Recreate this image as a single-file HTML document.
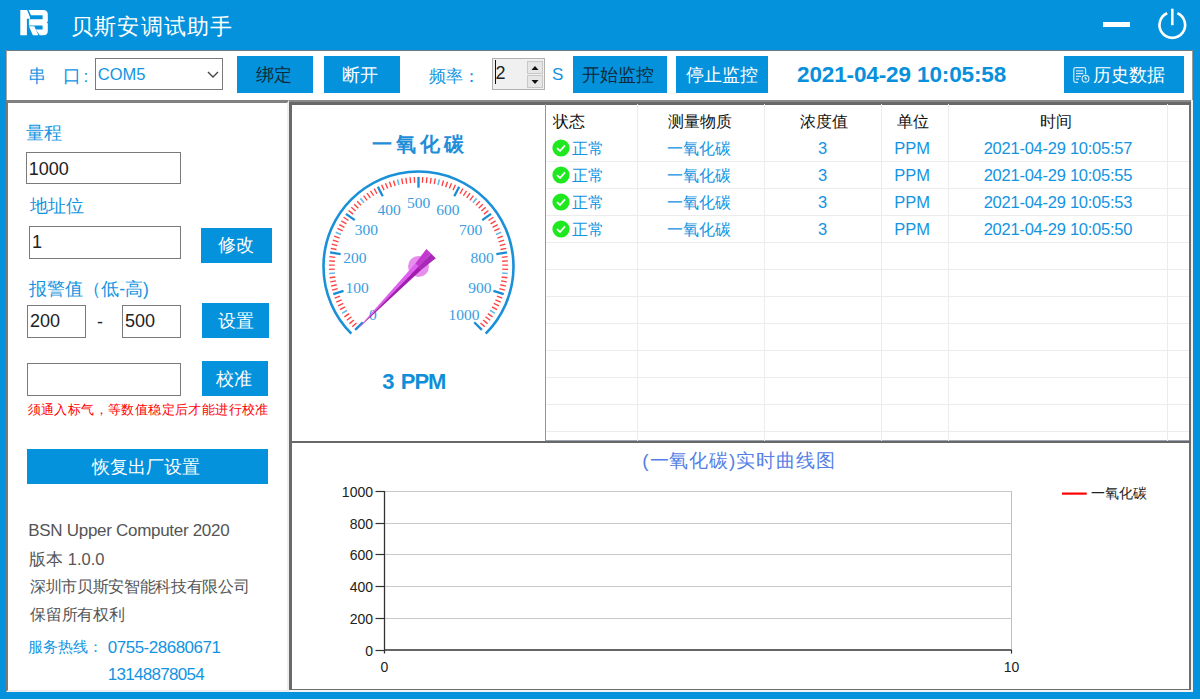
<!DOCTYPE html>
<html><head><meta charset="utf-8"><title>贝斯安调试助手</title>
<style>
*{margin:0;padding:0;box-sizing:border-box}
html,body{width:1200px;height:700px;overflow:hidden}
body{background:#0492dc;position:relative;font-family:'Liberation Sans',sans-serif;color:#222}
.a{position:absolute;white-space:nowrap}
.btn{position:absolute;background:#0492dc;color:#fff;font-size:18px;text-align:center}
.lbl{position:absolute;white-space:nowrap;color:#1394e2}
.tb{position:absolute;background:#fff;border:1px solid #7a7a7a}
.gl{position:absolute;background:#ececec}
</style></head><body>

<svg class="a" style="left:0;top:0" width="60" height="50" viewBox="0 0 60 50">
<g fill="#fff">
<polygon points="20.3,9.9 27.1,9.9 30,17.3 30,18.7 26.9,18.7 26.9,35.3 20.3,35.3"/>
<path d="M28.6,9.9 L43.2,9.9 Q47.8,9.9 47.8,14.5 L47.8,21.2 L46.9,22.4 L47.8,23.6 L47.8,30.7 Q47.8,35.3 43.2,35.3 L39.8,35.3 L35.6,29.6 L42.6,29.6 L42.6,25.6 L28.9,25.6 L28.9,19.3 L42.6,19.3 L42.6,15.3 L31,15.3 Z"/>
<polygon points="28.9,26.3 34.3,26.3 38.4,35.3 32.9,35.3"/>
</g></svg>
<div class="a" style="left:1103px;top:22px;width:27px;height:4.6px;background:#fff"></div>
<svg class="a" style="left:1150px;top:4px" width="44" height="40" viewBox="1150 4 44 40">
<path d="M1167.2,13.3 A12.8,12.8 0 1 0 1177.4,13.3" fill="none" stroke="#fff" stroke-width="2.6"/>
<line x1="1172.3" y1="8.7" x2="1172.3" y2="25.2" stroke="#fff" stroke-width="2.6"/>
</svg>
<div class="a" style="left:6px;top:50px;width:1187px;height:50px;background:#fff;border-top:1px solid #6b7b85;border-right:1px solid #9a9a9a;border-left:1px solid #a8a4a4"></div>
<div class="tb" style="left:95px;top:58px;width:128px;height:32px"></div>
<svg class="a" style="left:205px;top:68px" width="16" height="12"><polyline points="3,4 8,9 13,4" fill="none" stroke="#444" stroke-width="1.4"/></svg>
<div class="a" style="left:492px;top:58px;width:53px;height:32px;background:#f0f0f0;border:1px solid #b0b0b0"></div>
<div class="a" style="left:527px;top:61px;width:16px;height:13px;background:#e6e6e6;border:1px solid #c8c8c8"></div>
<div class="a" style="left:527px;top:74.5px;width:16px;height:13px;background:#e6e6e6;border:1px solid #c8c8c8"></div>
<svg class="a" style="left:527px;top:61px" width="16" height="27"><polygon points="4.5,9 11.5,9 8,5" fill="#111"/><polygon points="4.5,19 11.5,19 8,23" fill="#111"/></svg>
<div class="a" style="left:6px;top:100px;width:283px;height:592px;background:#fff;border-top:3px solid #808080;border-left:2px solid #7d7878;border-right:2px solid #eeeeee;border-bottom:2px solid #efeded"></div>
<div class="tb" style="left:26px;top:152px;width:155px;height:32px"></div>
<div class="tb" style="left:29px;top:226px;width:152px;height:33px"></div>
<div class="tb" style="left:27px;top:305px;width:59px;height:33px"></div>
<div class="tb" style="left:122px;top:305px;width:59px;height:33px"></div>
<div class="tb" style="left:27px;top:363px;width:154px;height:33px"></div>
<div class="a" style="left:289px;top:100px;width:904px;height:592px;background:#fff;border-top:5px solid #686868;border-left:3px solid #6a6a6a;border-right:4px solid #6e6e6e;border-bottom:3px solid #6e6e6e"></div>
<div class="a" style="left:1191px;top:100px;width:2px;height:592px;background:#f2f2f2"></div>
<div class="a" style="left:289px;top:690px;width:904px;height:2px;background:#f2f2f2"></div>
<div class="a" style="left:289px;top:100px;width:902px;height:2px;background:#8a8a8a"></div>
<div class="a" style="left:291px;top:441px;width:900px;height:2px;background:#686868"></div>
<div class="a" style="left:545px;top:440px;width:644px;height:1px;background:#9aa3b0"></div>
<div class="a" style="left:545px;top:104px;width:1px;height:337px;background:#8a95a5"></div>
<svg class="a" style="left:291px;top:104px" width="254" height="337" viewBox="291 104 254 337">
<path d="M351.32,333.68 A95,95 0 1 1 485.68,333.68" fill="none" stroke="#1a90d8" stroke-width="2.6"/>
<line x1="362.78" y1="322.22" x2="355.14" y2="329.86" stroke="#1a8cd6" stroke-width="2.3"/>
<line x1="356.52" y1="322.90" x2="352.23" y2="326.80" stroke="#ff4040" stroke-width="1.35"/>
<line x1="353.93" y1="319.92" x2="349.46" y2="323.61" stroke="#ff4040" stroke-width="1.35"/>
<line x1="351.49" y1="316.82" x2="346.85" y2="320.30" stroke="#ff4040" stroke-width="1.35"/>
<line x1="349.19" y1="313.60" x2="344.39" y2="316.86" stroke="#ff4040" stroke-width="1.35"/>
<line x1="347.05" y1="310.29" x2="342.10" y2="313.32" stroke="#6ab8e6" stroke-width="1.6"/>
<line x1="345.07" y1="306.87" x2="339.98" y2="309.67" stroke="#ff4040" stroke-width="1.35"/>
<line x1="343.25" y1="303.37" x2="338.04" y2="305.92" stroke="#ff4040" stroke-width="1.35"/>
<line x1="341.59" y1="299.78" x2="336.27" y2="302.08" stroke="#ff4040" stroke-width="1.35"/>
<line x1="340.11" y1="296.12" x2="334.68" y2="298.17" stroke="#ff4040" stroke-width="1.35"/>
<line x1="343.56" y1="290.85" x2="333.29" y2="294.19" stroke="#1a8cd6" stroke-width="2.3"/>
<line x1="337.67" y1="288.61" x2="332.08" y2="290.14" stroke="#ff4040" stroke-width="1.35"/>
<line x1="336.72" y1="284.78" x2="331.06" y2="286.05" stroke="#ff4040" stroke-width="1.35"/>
<line x1="335.95" y1="280.91" x2="330.23" y2="281.90" stroke="#ff4040" stroke-width="1.35"/>
<line x1="335.36" y1="277.00" x2="329.61" y2="277.73" stroke="#ff4040" stroke-width="1.35"/>
<line x1="334.96" y1="273.07" x2="329.18" y2="273.53" stroke="#6ab8e6" stroke-width="1.6"/>
<line x1="334.74" y1="269.13" x2="328.94" y2="269.31" stroke="#ff4040" stroke-width="1.35"/>
<line x1="334.71" y1="265.18" x2="328.91" y2="265.09" stroke="#ff4040" stroke-width="1.35"/>
<line x1="334.87" y1="261.24" x2="329.08" y2="260.87" stroke="#ff4040" stroke-width="1.35"/>
<line x1="335.21" y1="257.30" x2="329.44" y2="256.67" stroke="#ff4040" stroke-width="1.35"/>
<line x1="340.67" y1="254.17" x2="330.00" y2="252.48" stroke="#1a8cd6" stroke-width="2.3"/>
<line x1="336.44" y1="249.51" x2="330.76" y2="248.33" stroke="#ff4040" stroke-width="1.35"/>
<line x1="337.33" y1="245.66" x2="331.71" y2="244.22" stroke="#ff4040" stroke-width="1.35"/>
<line x1="338.40" y1="241.86" x2="332.86" y2="240.15" stroke="#ff4040" stroke-width="1.35"/>
<line x1="339.65" y1="238.11" x2="334.20" y2="236.15" stroke="#ff4040" stroke-width="1.35"/>
<line x1="341.08" y1="234.43" x2="335.72" y2="232.21" stroke="#6ab8e6" stroke-width="1.6"/>
<line x1="342.68" y1="230.82" x2="337.43" y2="228.35" stroke="#ff4040" stroke-width="1.35"/>
<line x1="344.44" y1="227.29" x2="339.31" y2="224.57" stroke="#ff4040" stroke-width="1.35"/>
<line x1="346.37" y1="223.84" x2="341.38" y2="220.89" stroke="#ff4040" stroke-width="1.35"/>
<line x1="348.46" y1="220.49" x2="343.61" y2="217.31" stroke="#ff4040" stroke-width="1.35"/>
<line x1="354.75" y1="220.18" x2="346.01" y2="213.83" stroke="#1a8cd6" stroke-width="2.3"/>
<line x1="353.10" y1="214.10" x2="348.57" y2="210.48" stroke="#ff4040" stroke-width="1.35"/>
<line x1="355.64" y1="211.08" x2="351.29" y2="207.25" stroke="#ff4040" stroke-width="1.35"/>
<line x1="358.32" y1="208.18" x2="354.16" y2="204.15" stroke="#ff4040" stroke-width="1.35"/>
<line x1="361.13" y1="205.41" x2="357.16" y2="201.18" stroke="#ff4040" stroke-width="1.35"/>
<line x1="364.08" y1="202.78" x2="360.31" y2="198.37" stroke="#6ab8e6" stroke-width="1.6"/>
<line x1="367.14" y1="200.29" x2="363.58" y2="195.70" stroke="#ff4040" stroke-width="1.35"/>
<line x1="370.31" y1="197.94" x2="366.98" y2="193.19" stroke="#ff4040" stroke-width="1.35"/>
<line x1="373.60" y1="195.75" x2="370.49" y2="190.85" stroke="#ff4040" stroke-width="1.35"/>
<line x1="376.98" y1="193.71" x2="374.11" y2="188.67" stroke="#ff4040" stroke-width="1.35"/>
<line x1="382.73" y1="196.29" x2="377.82" y2="186.67" stroke="#1a8cd6" stroke-width="2.3"/>
<line x1="384.02" y1="190.12" x2="381.63" y2="184.84" stroke="#ff4040" stroke-width="1.35"/>
<line x1="387.65" y1="188.58" x2="385.52" y2="183.19" stroke="#ff4040" stroke-width="1.35"/>
<line x1="391.36" y1="187.22" x2="389.48" y2="181.73" stroke="#ff4040" stroke-width="1.35"/>
<line x1="395.12" y1="186.03" x2="393.50" y2="180.46" stroke="#ff4040" stroke-width="1.35"/>
<line x1="398.94" y1="185.02" x2="397.58" y2="179.38" stroke="#6ab8e6" stroke-width="1.6"/>
<line x1="402.80" y1="184.18" x2="401.71" y2="178.49" stroke="#ff4040" stroke-width="1.35"/>
<line x1="406.69" y1="183.54" x2="405.88" y2="177.79" stroke="#ff4040" stroke-width="1.35"/>
<line x1="410.61" y1="183.07" x2="410.07" y2="177.30" stroke="#ff4040" stroke-width="1.35"/>
<line x1="414.55" y1="182.79" x2="414.28" y2="177.00" stroke="#ff4040" stroke-width="1.35"/>
<line x1="418.50" y1="187.70" x2="418.50" y2="176.90" stroke="#1a8cd6" stroke-width="2.3"/>
<line x1="422.45" y1="182.79" x2="422.72" y2="177.00" stroke="#ff4040" stroke-width="1.35"/>
<line x1="426.39" y1="183.07" x2="426.93" y2="177.30" stroke="#ff4040" stroke-width="1.35"/>
<line x1="430.31" y1="183.54" x2="431.12" y2="177.79" stroke="#ff4040" stroke-width="1.35"/>
<line x1="434.20" y1="184.18" x2="435.29" y2="178.49" stroke="#ff4040" stroke-width="1.35"/>
<line x1="438.06" y1="185.02" x2="439.42" y2="179.38" stroke="#6ab8e6" stroke-width="1.6"/>
<line x1="441.88" y1="186.03" x2="443.50" y2="180.46" stroke="#ff4040" stroke-width="1.35"/>
<line x1="445.64" y1="187.22" x2="447.52" y2="181.73" stroke="#ff4040" stroke-width="1.35"/>
<line x1="449.35" y1="188.58" x2="451.48" y2="183.19" stroke="#ff4040" stroke-width="1.35"/>
<line x1="452.98" y1="190.12" x2="455.37" y2="184.84" stroke="#ff4040" stroke-width="1.35"/>
<line x1="454.27" y1="196.29" x2="459.18" y2="186.67" stroke="#1a8cd6" stroke-width="2.3"/>
<line x1="460.02" y1="193.71" x2="462.89" y2="188.67" stroke="#ff4040" stroke-width="1.35"/>
<line x1="463.40" y1="195.75" x2="466.51" y2="190.85" stroke="#ff4040" stroke-width="1.35"/>
<line x1="466.69" y1="197.94" x2="470.02" y2="193.19" stroke="#ff4040" stroke-width="1.35"/>
<line x1="469.86" y1="200.29" x2="473.42" y2="195.70" stroke="#ff4040" stroke-width="1.35"/>
<line x1="472.92" y1="202.78" x2="476.69" y2="198.37" stroke="#6ab8e6" stroke-width="1.6"/>
<line x1="475.87" y1="205.41" x2="479.84" y2="201.18" stroke="#ff4040" stroke-width="1.35"/>
<line x1="478.68" y1="208.18" x2="482.84" y2="204.15" stroke="#ff4040" stroke-width="1.35"/>
<line x1="481.36" y1="211.08" x2="485.71" y2="207.25" stroke="#ff4040" stroke-width="1.35"/>
<line x1="483.90" y1="214.10" x2="488.43" y2="210.48" stroke="#ff4040" stroke-width="1.35"/>
<line x1="482.25" y1="220.18" x2="490.99" y2="213.83" stroke="#1a8cd6" stroke-width="2.3"/>
<line x1="488.54" y1="220.49" x2="493.39" y2="217.31" stroke="#ff4040" stroke-width="1.35"/>
<line x1="490.63" y1="223.84" x2="495.62" y2="220.89" stroke="#ff4040" stroke-width="1.35"/>
<line x1="492.56" y1="227.29" x2="497.69" y2="224.57" stroke="#ff4040" stroke-width="1.35"/>
<line x1="494.32" y1="230.82" x2="499.57" y2="228.35" stroke="#ff4040" stroke-width="1.35"/>
<line x1="495.92" y1="234.43" x2="501.28" y2="232.21" stroke="#6ab8e6" stroke-width="1.6"/>
<line x1="497.35" y1="238.11" x2="502.80" y2="236.15" stroke="#ff4040" stroke-width="1.35"/>
<line x1="498.60" y1="241.86" x2="504.14" y2="240.15" stroke="#ff4040" stroke-width="1.35"/>
<line x1="499.67" y1="245.66" x2="505.29" y2="244.22" stroke="#ff4040" stroke-width="1.35"/>
<line x1="500.56" y1="249.51" x2="506.24" y2="248.33" stroke="#ff4040" stroke-width="1.35"/>
<line x1="496.33" y1="254.17" x2="507.00" y2="252.48" stroke="#1a8cd6" stroke-width="2.3"/>
<line x1="501.79" y1="257.30" x2="507.56" y2="256.67" stroke="#ff4040" stroke-width="1.35"/>
<line x1="502.13" y1="261.24" x2="507.92" y2="260.87" stroke="#ff4040" stroke-width="1.35"/>
<line x1="502.29" y1="265.18" x2="508.09" y2="265.09" stroke="#ff4040" stroke-width="1.35"/>
<line x1="502.26" y1="269.13" x2="508.06" y2="269.31" stroke="#ff4040" stroke-width="1.35"/>
<line x1="502.04" y1="273.07" x2="507.82" y2="273.53" stroke="#6ab8e6" stroke-width="1.6"/>
<line x1="501.64" y1="277.00" x2="507.39" y2="277.73" stroke="#ff4040" stroke-width="1.35"/>
<line x1="501.05" y1="280.91" x2="506.77" y2="281.90" stroke="#ff4040" stroke-width="1.35"/>
<line x1="500.28" y1="284.78" x2="505.94" y2="286.05" stroke="#ff4040" stroke-width="1.35"/>
<line x1="499.33" y1="288.61" x2="504.92" y2="290.14" stroke="#ff4040" stroke-width="1.35"/>
<line x1="493.44" y1="290.85" x2="503.71" y2="294.19" stroke="#1a8cd6" stroke-width="2.3"/>
<line x1="496.89" y1="296.12" x2="502.32" y2="298.17" stroke="#ff4040" stroke-width="1.35"/>
<line x1="495.41" y1="299.78" x2="500.73" y2="302.08" stroke="#ff4040" stroke-width="1.35"/>
<line x1="493.75" y1="303.37" x2="498.96" y2="305.92" stroke="#ff4040" stroke-width="1.35"/>
<line x1="491.93" y1="306.87" x2="497.02" y2="309.67" stroke="#ff4040" stroke-width="1.35"/>
<line x1="489.95" y1="310.29" x2="494.90" y2="313.32" stroke="#6ab8e6" stroke-width="1.6"/>
<line x1="487.81" y1="313.60" x2="492.61" y2="316.86" stroke="#ff4040" stroke-width="1.35"/>
<line x1="485.51" y1="316.82" x2="490.15" y2="320.30" stroke="#ff4040" stroke-width="1.35"/>
<line x1="483.07" y1="319.92" x2="487.54" y2="323.61" stroke="#ff4040" stroke-width="1.35"/>
<line x1="480.48" y1="322.90" x2="484.77" y2="326.80" stroke="#ff4040" stroke-width="1.35"/>
<line x1="474.22" y1="322.22" x2="481.86" y2="329.86" stroke="#1a8cd6" stroke-width="2.3"/>
<text x="372.9" y="319.5" text-anchor="middle" font-family="Liberation Serif" font-size="15.5" fill="#3a9de0">0</text>
<text x="357.2" y="293.4" text-anchor="middle" font-family="Liberation Serif" font-size="15.5" fill="#3a9de0">100</text>
<text x="354.8" y="263.0" text-anchor="middle" font-family="Liberation Serif" font-size="15.5" fill="#3a9de0">200</text>
<text x="366.3" y="234.7" text-anchor="middle" font-family="Liberation Serif" font-size="15.5" fill="#3a9de0">300</text>
<text x="389.2" y="214.8" text-anchor="middle" font-family="Liberation Serif" font-size="15.5" fill="#3a9de0">400</text>
<text x="418.5" y="207.7" text-anchor="middle" font-family="Liberation Serif" font-size="15.5" fill="#3a9de0">500</text>
<text x="447.8" y="214.8" text-anchor="middle" font-family="Liberation Serif" font-size="15.5" fill="#3a9de0">600</text>
<text x="470.7" y="234.7" text-anchor="middle" font-family="Liberation Serif" font-size="15.5" fill="#3a9de0">700</text>
<text x="482.2" y="263.0" text-anchor="middle" font-family="Liberation Serif" font-size="15.5" fill="#3a9de0">800</text>
<text x="479.8" y="293.4" text-anchor="middle" font-family="Liberation Serif" font-size="15.5" fill="#3a9de0">900</text>
<text x="464.1" y="319.5" text-anchor="middle" font-family="Liberation Serif" font-size="15.5" fill="#3a9de0">1000</text>
<circle cx="418.5" cy="266.5" r="10.5" fill="#e27ae8" opacity="0.85"/>
<polygon points="356.00,330.50 415.35,263.43 418.50,266.50" fill="#e05ef0"/>
<polygon points="356.00,330.50 418.50,266.50 421.65,269.57" fill="#a21cb0"/>
<polygon points="415.35,263.43 426.35,249.01 431.08,253.62 418.50,266.50" fill="#c43ad0"/>
<polygon points="418.50,266.50 431.08,253.62 435.80,258.23 421.65,269.57" fill="#a828b8"/>
</svg>
<div class="gl" style="left:636.5px;top:104px;width:1px;height:337px"></div>
<div class="gl" style="left:764px;top:104px;width:1px;height:337px"></div>
<div class="gl" style="left:881px;top:104px;width:1px;height:337px"></div>
<div class="gl" style="left:947.5px;top:104px;width:1px;height:337px"></div>
<div class="gl" style="left:1167px;top:104px;width:1px;height:337px"></div>
<div class="gl" style="left:546px;top:160.5px;width:643px;height:1px"></div>
<div class="gl" style="left:546px;top:187.5px;width:643px;height:1px"></div>
<div class="gl" style="left:546px;top:214.5px;width:643px;height:1px"></div>
<div class="gl" style="left:546px;top:241.5px;width:643px;height:1px"></div>
<div class="gl" style="left:546px;top:268.5px;width:643px;height:1px"></div>
<div class="gl" style="left:546px;top:295.5px;width:643px;height:1px"></div>
<div class="gl" style="left:546px;top:322.5px;width:643px;height:1px"></div>
<div class="gl" style="left:546px;top:349.5px;width:643px;height:1px"></div>
<div class="gl" style="left:546px;top:376.5px;width:643px;height:1px"></div>
<div class="gl" style="left:546px;top:403.5px;width:643px;height:1px"></div>
<div class="gl" style="left:546px;top:430.5px;width:643px;height:1px"></div>
<svg class="a" style="left:552px;top:138.5px" width="18" height="18"><circle cx="9" cy="9" r="8.6" fill="#1ee81e"/><polyline points="5,9.2 8,12 13,6.3" fill="none" stroke="#fff" stroke-width="1.8"/></svg>
<svg class="a" style="left:552px;top:165.5px" width="18" height="18"><circle cx="9" cy="9" r="8.6" fill="#1ee81e"/><polyline points="5,9.2 8,12 13,6.3" fill="none" stroke="#fff" stroke-width="1.8"/></svg>
<svg class="a" style="left:552px;top:192.5px" width="18" height="18"><circle cx="9" cy="9" r="8.6" fill="#1ee81e"/><polyline points="5,9.2 8,12 13,6.3" fill="none" stroke="#fff" stroke-width="1.8"/></svg>
<svg class="a" style="left:552px;top:219.5px" width="18" height="18"><circle cx="9" cy="9" r="8.6" fill="#1ee81e"/><polyline points="5,9.2 8,12 13,6.3" fill="none" stroke="#fff" stroke-width="1.8"/></svg>
<svg class="a" style="left:291px;top:443px" width="898" height="246" viewBox="291 443 898 246">
<line x1="375.5" y1="650.5" x2="384.5" y2="650.5" stroke="#333" stroke-width="1.2"/>
<text x="373" y="655.5" text-anchor="end" font-family="Liberation Sans" font-size="14" fill="#222">0</text>
<line x1="384.5" y1="618.5" x2="1011.5" y2="618.5" stroke="#c8c8c8" stroke-width="1"/>
<line x1="375.5" y1="618.5" x2="384.5" y2="618.5" stroke="#333" stroke-width="1.2"/>
<text x="373" y="623.5" text-anchor="end" font-family="Liberation Sans" font-size="14" fill="#222">200</text>
<line x1="384.5" y1="586.5" x2="1011.5" y2="586.5" stroke="#c8c8c8" stroke-width="1"/>
<line x1="375.5" y1="586.5" x2="384.5" y2="586.5" stroke="#333" stroke-width="1.2"/>
<text x="373" y="591.5" text-anchor="end" font-family="Liberation Sans" font-size="14" fill="#222">400</text>
<line x1="384.5" y1="554.5" x2="1011.5" y2="554.5" stroke="#c8c8c8" stroke-width="1"/>
<line x1="375.5" y1="554.5" x2="384.5" y2="554.5" stroke="#333" stroke-width="1.2"/>
<text x="373" y="559.5" text-anchor="end" font-family="Liberation Sans" font-size="14" fill="#222">600</text>
<line x1="384.5" y1="523.5" x2="1011.5" y2="523.5" stroke="#c8c8c8" stroke-width="1"/>
<line x1="375.5" y1="523.5" x2="384.5" y2="523.5" stroke="#333" stroke-width="1.2"/>
<text x="373" y="528.5" text-anchor="end" font-family="Liberation Sans" font-size="14" fill="#222">800</text>
<line x1="384.5" y1="491.5" x2="1011.5" y2="491.5" stroke="#c8c8c8" stroke-width="1"/>
<line x1="375.5" y1="491.5" x2="384.5" y2="491.5" stroke="#333" stroke-width="1.2"/>
<text x="373" y="496.5" text-anchor="end" font-family="Liberation Sans" font-size="14" fill="#222">1000</text>
<line x1="1011.5" y1="491" x2="1011.5" y2="653.5" stroke="#c0c0c0" stroke-width="1"/>
<line x1="384.5" y1="491" x2="384.5" y2="653.5" stroke="#333" stroke-width="1.3"/>
<line x1="384.5" y1="650" x2="1011.5" y2="650" stroke="#333" stroke-width="1.3"/>
<line x1="1011.5" y1="650" x2="1011.5" y2="653.5" stroke="#333" stroke-width="1.2"/>
<text x="384.5" y="671.5" text-anchor="middle" font-family="Liberation Sans" font-size="14" fill="#222">0</text>
<text x="1011.5" y="671.5" text-anchor="middle" font-family="Liberation Sans" font-size="14" fill="#222">10</text>
<line x1="1062" y1="493.6" x2="1086.7" y2="493.6" stroke="#ff0000" stroke-width="2.2"/>
</svg>
<div class="a" style="left:0;top:699px;width:1200px;height:1px;background:#e6f3fb"></div>
<div class="a" style="left:237px;top:56px;width:76px;height:37px;background:#0492dc"></div>
<div class="a" style="left:324px;top:56px;width:76px;height:37px;background:#0492dc"></div>
<div class="a" style="left:573px;top:56px;width:94px;height:37px;background:#0492dc"></div>
<div class="a" style="left:676px;top:56px;width:92px;height:37px;background:#0492dc"></div>
<div class="a" style="left:1064px;top:56px;width:120px;height:37px;background:#0492dc"></div>
<div class="a" style="left:201px;top:228px;width:71px;height:35px;background:#0492dc"></div>
<div class="a" style="left:202px;top:303px;width:67px;height:35px;background:#0492dc"></div>
<div class="a" style="left:202px;top:361px;width:66px;height:35px;background:#0492dc"></div>
<div class="a" style="left:27px;top:449px;width:241px;height:35px;background:#0492dc"></div>
<svg class="a" style="left:1068px;top:62px" width="28" height="26" viewBox="1068 62 28 26">
<g fill="none" stroke="#cdeafb" stroke-width="1.2">
<path d="M1078,82.3 L1075.6,82.3 Q1073.8,82.3 1073.8,80.5 L1073.8,69.4 Q1073.8,67.6 1075.6,67.6 L1083.8,67.6 Q1085.6,67.6 1085.6,69.4 L1085.6,74.2"/>
<line x1="1076" y1="70.9" x2="1083.4" y2="70.9"/><line x1="1076" y1="73.5" x2="1083.4" y2="73.5"/>
<line x1="1076" y1="76.3" x2="1081" y2="76.3"/><line x1="1076" y1="79.1" x2="1079" y2="79.1"/>
<circle cx="1085.5" cy="78.7" r="3.4"/><polyline points="1085.3,76.8 1085.3,78.9 1087,78.9"/>
</g></svg>
<div class="a" style="left:495.5px;top:64px;font-size:18px;line-height:18px;color:#222">2</div>
<div class="a" style="left:494.5px;top:60px;width:1px;height:24px;background:#111"></div>
<div class="a" style="left:71.0px;top:16.2px;font-size:21.5px;line-height:22px;color:#fff;letter-spacing:1.2px">贝斯安调试助手</div>
<div class="a" style="left:28.1px;top:66.9px;font-size:18px;line-height:18px;color:#1394e2">串</div>
<div class="a" style="left:63.4px;top:66.8px;font-size:18px;line-height:18px;color:#1394e2">口</div>
<div class="a" style="left:83.5px;top:67.9px;font-size:17px;line-height:18px;color:#1394e2">:</div>
<div class="a" style="left:97.8px;top:64.5px;font-size:16.5px;line-height:18px;color:#1394e2">COM5</div>
<div class="a" style="left:256.1px;top:66.4px;font-size:18px;line-height:18px;color:#0e2a3a">绑定</div>
<div class="a" style="left:341.9px;top:66.4px;font-size:18px;line-height:18px;color:#fff">断开</div>
<div class="a" style="left:428.9px;top:66.6px;font-size:16.5px;line-height:18px;color:#1394e2">频率：</div>
<div class="a" style="left:552.0px;top:66.0px;font-size:17px;line-height:18px;color:#1394e2">S</div>
<div class="a" style="left:582.2px;top:65.8px;font-size:18px;line-height:18px;color:#0e2a3a">开始监控</div>
<div class="a" style="left:685.9px;top:65.8px;font-size:18px;line-height:18px;color:#fff">停止监控</div>
<div class="a" style="left:797.0px;top:64.0px;font-size:22.5px;line-height:22px;font-weight:bold;color:#0890dc;letter-spacing:-0.12px">2021-04-29 10:05:58</div>
<div class="a" style="left:1093.0px;top:65.8px;font-size:18px;line-height:18px;color:#fff">历史数据</div>
<div class="a" style="left:26.1px;top:124.4px;font-size:17.5px;line-height:18px;color:#1394e2">量程</div>
<div class="a" style="left:28.8px;top:160.0px;font-size:18px;line-height:18px;color:#222">1000</div>
<div class="a" style="left:29.5px;top:197.0px;font-size:18px;line-height:18px;color:#1394e2">地址位</div>
<div class="a" style="left:32.0px;top:233.1px;font-size:18px;line-height:18px;color:#222">1</div>
<div class="a" style="left:217.8px;top:235.9px;font-size:18px;line-height:18px;color:#fff">修改</div>
<div class="a" style="left:29.3px;top:279.5px;font-size:17.5px;line-height:18px;color:#1394e2">报警值（低-高)</div>
<div class="a" style="left:29.9px;top:312.1px;font-size:18px;line-height:18px;color:#222">200</div>
<div class="a" style="left:97.0px;top:312.7px;font-size:18px;line-height:18px;color:#222">-</div>
<div class="a" style="left:125.0px;top:312.1px;font-size:18px;line-height:18px;color:#222">500</div>
<div class="a" style="left:217.8px;top:311.8px;font-size:18px;line-height:18px;color:#fff">设置</div>
<div class="a" style="left:215.9px;top:369.8px;font-size:18px;line-height:18px;color:#fff">校准</div>
<div class="a" style="left:27.6px;top:403.2px;font-size:13px;line-height:14px;color:#ff0000;letter-spacing:0.4px">须通入标气，等数值稳定后才能进行校准</div>
<div class="a" style="left:92.3px;top:457.8px;font-size:18px;line-height:18px;color:#fff">恢复出厂设置</div>
<div class="a" style="left:28.3px;top:521.9px;font-size:17px;line-height:18px;color:#555;letter-spacing:-0.3px">BSN Upper Computer 2020</div>
<div class="a" style="left:29.2px;top:549.5px;font-size:16.5px;line-height:18px;color:#555">版本 1.0.0</div>
<div class="a" style="left:30.1px;top:578.7px;font-size:16px;letter-spacing:-0.35px;line-height:16px;color:#555">深圳市贝斯安智能科技有限公司</div>
<div class="a" style="left:30.1px;top:607.1px;font-size:16px;letter-spacing:-0.2px;line-height:16px;color:#555">保留所有权利</div>
<div class="a" style="left:28.4px;top:638.6px;font-size:15px;line-height:16px;color:#1394e2">服务热线：</div>
<div class="a" style="left:107.8px;top:638.7px;font-size:17px;line-height:18px;color:#1394e2;letter-spacing:-0.5px">0755-28680671</div>
<div class="a" style="left:107.8px;top:665.5px;font-size:17px;line-height:18px;color:#1394e2;letter-spacing:-0.7px">13148878054</div>
<div class="a" style="left:371.9px;top:134.0px;font-size:20px;line-height:20px;font-weight:bold;color:#1e8ed8;letter-spacing:4px">一氧化碳</div>
<div class="a" style="left:382.2px;top:371.2px;font-size:22px;line-height:22px;font-weight:bold;color:#0f8ed9;letter-spacing:-1.1px;word-spacing:2.5px">3 PPM</div>
<div class="a" style="left:553.3px;top:113.8px;font-size:15.5px;line-height:16px;color:#111">状态</div>
<div class="a" style="left:668.1px;top:114.3px;font-size:15.7px;line-height:16px;color:#111">测量物质</div>
<div class="a" style="left:799.6px;top:114.3px;font-size:15.7px;line-height:16px;color:#111">浓度值</div>
<div class="a" style="left:897.0px;top:114.3px;font-size:15.7px;line-height:16px;color:#111">单位</div>
<div class="a" style="left:1040.2px;top:114.3px;font-size:15.7px;line-height:16px;color:#111">时间</div>
<div class="a" style="left:572.1px;top:140.8px;font-size:15.5px;line-height:16px;color:#1394e2">正常</div>
<div class="a" style="left:667.2px;top:140.8px;font-size:15.7px;line-height:16px;color:#1394e2">一氧化碳</div>
<div class="a" style="left:818.1px;top:140.0px;font-size:16.5px;line-height:16px;color:#1394e2">3</div>
<div class="a" style="left:894.3px;top:139.9px;font-size:16.5px;line-height:16px;color:#1394e2;letter-spacing:0px">PPM</div>
<div class="a" style="left:983.7px;top:139.6px;font-size:16.5px;line-height:16px;color:#1394e2;letter-spacing:-0.25px">2021-04-29 10:05:57</div>
<div class="a" style="left:572.1px;top:167.8px;font-size:15.5px;line-height:16px;color:#1394e2">正常</div>
<div class="a" style="left:667.2px;top:167.8px;font-size:15.7px;line-height:16px;color:#1394e2">一氧化碳</div>
<div class="a" style="left:818.1px;top:167.0px;font-size:16.5px;line-height:16px;color:#1394e2">3</div>
<div class="a" style="left:894.3px;top:166.9px;font-size:16.5px;line-height:16px;color:#1394e2;letter-spacing:0px">PPM</div>
<div class="a" style="left:983.7px;top:166.6px;font-size:16.5px;line-height:16px;color:#1394e2;letter-spacing:-0.25px">2021-04-29 10:05:55</div>
<div class="a" style="left:572.1px;top:194.8px;font-size:15.5px;line-height:16px;color:#1394e2">正常</div>
<div class="a" style="left:667.2px;top:194.8px;font-size:15.7px;line-height:16px;color:#1394e2">一氧化碳</div>
<div class="a" style="left:818.1px;top:194.0px;font-size:16.5px;line-height:16px;color:#1394e2">3</div>
<div class="a" style="left:894.3px;top:193.9px;font-size:16.5px;line-height:16px;color:#1394e2;letter-spacing:0px">PPM</div>
<div class="a" style="left:983.7px;top:193.6px;font-size:16.5px;line-height:16px;color:#1394e2;letter-spacing:-0.25px">2021-04-29 10:05:53</div>
<div class="a" style="left:572.1px;top:221.8px;font-size:15.5px;line-height:16px;color:#1394e2">正常</div>
<div class="a" style="left:667.2px;top:221.8px;font-size:15.7px;line-height:16px;color:#1394e2">一氧化碳</div>
<div class="a" style="left:818.1px;top:221.0px;font-size:16.5px;line-height:16px;color:#1394e2">3</div>
<div class="a" style="left:894.3px;top:220.9px;font-size:16.5px;line-height:16px;color:#1394e2;letter-spacing:0px">PPM</div>
<div class="a" style="left:983.7px;top:220.6px;font-size:16.5px;line-height:16px;color:#1394e2;letter-spacing:-0.25px">2021-04-29 10:05:50</div>
<div class="a" style="left:642.3px;top:451.0px;font-size:19px;line-height:20px;color:#5680e6;letter-spacing:0.9px">(一氧化碳)实时曲线图</div>
<div class="a" style="left:1090.8px;top:486.1px;font-size:14px;line-height:14px;color:#222">一氧化碳</div>
</body></html>
